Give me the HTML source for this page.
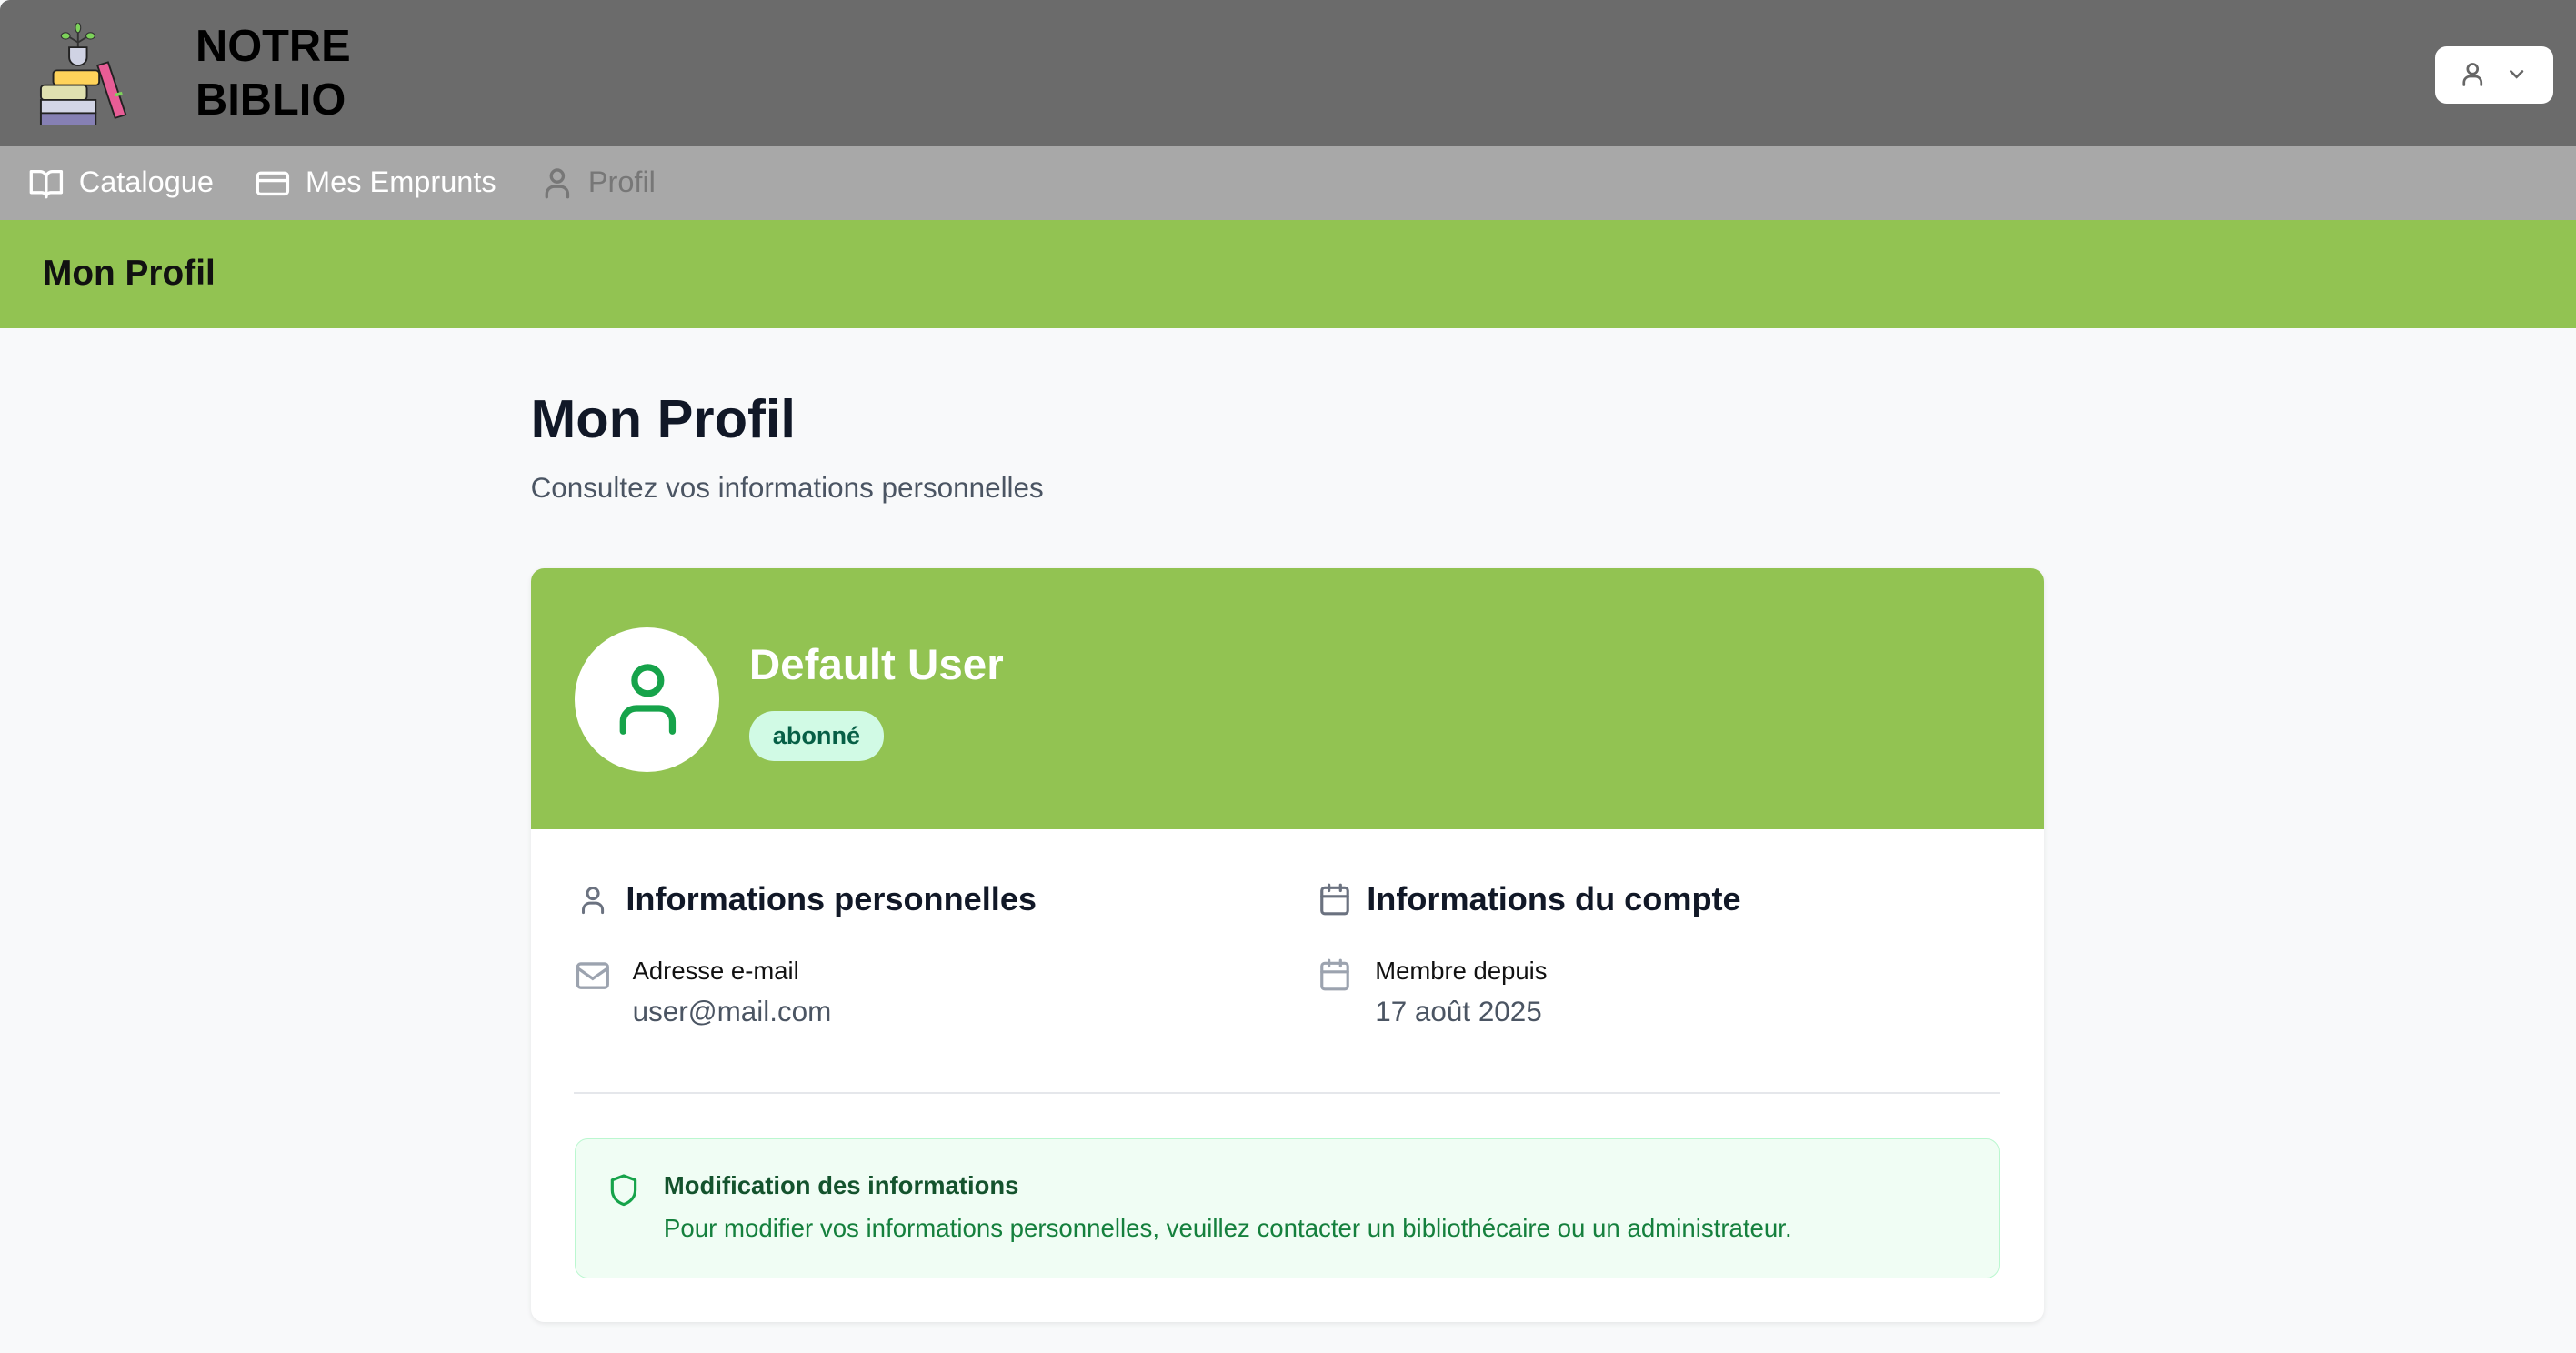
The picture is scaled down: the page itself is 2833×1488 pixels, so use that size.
<!DOCTYPE html>
<html><head><meta charset="utf-8"><style>
*{margin:0;padding:0;box-sizing:border-box}
html,body{width:2833px;height:1488px;overflow:hidden}
body{background:#f8f9fa;font-family:"Liberation Sans",sans-serif}
#w{zoom:1.80676;width:1568px;height:824px;position:relative}
.a{position:absolute}
svg{display:block}
</style></head><body><div id="w">
<div class="a" style="left:0;top:0;width:1568px;height:89px;background:#6b6b6b;border-top-left-radius:6px"></div>
<svg class="a" style="left:24px;top:14px" width="56" height="62" viewBox="4 0 52 62" preserveAspectRatio="none">
<path d="M26 15 V4 M26 12 L20 8 M26 12 L32 8" stroke="#333" stroke-width="1"/>
<ellipse cx="26" cy="3" rx="1.5" ry="3" fill="#7dd35a" stroke="#333" stroke-width=".6"/>
<ellipse cx="19" cy="8" rx="2.5" ry="2" fill="#7dd35a" stroke="#333" stroke-width=".6"/>
<ellipse cx="33" cy="8" rx="2.5" ry="2" fill="#7dd35a" stroke="#333" stroke-width=".6"/>
<path d="M21 15 h10 v6 a5 5 0 0 1 -10 0z" fill="#d0d3e4" stroke="#222" stroke-width="1"/>
<rect x="12" y="29" width="26" height="9" rx="2" fill="#ffd35a" stroke="#222"/>
<rect x="5" y="38" width="26" height="9" rx="2" fill="#dfe0b0" stroke="#222"/>
<rect x="5" y="47" width="31" height="8" fill="#d3d5e6" stroke="#222"/>
<rect x="5" y="55" width="31" height="8" fill="#8680b4" stroke="#222"/>
<path d="M43 24 l10 32 l-6 2 l-10 -32z" fill="#e85d96" stroke="#222"/>
<path d="M47 44 l4 -1" stroke="#7dd35a" stroke-width="2"/>
</svg>
<div class="a" style="left:119px;top:12px;font-size:27px;font-weight:bold;line-height:33px;color:#000">NOTRE<br>BIBLIO</div>
<div class="a" style="left:1482px;top:28px;width:72px;height:35px;background:#fff;border-radius:7px"></div>
<svg class="a" style="left:1496px;top:36px" width="18" height="18" viewBox="0 0 24 24" fill="none" stroke="#666" stroke-width="2" stroke-linecap="round"><circle cx="12" cy="8" r="4"/><path d="M5 21v-2a5 5 0 0 1 5-5h4a5 5 0 0 1 5 5v2"/></svg>
<svg class="a" style="left:1525px;top:38px" width="14" height="14" viewBox="0 0 24 24" fill="none" stroke="#666" stroke-width="2.5" stroke-linecap="round"><path d="M6 9l6 6 6-6"/></svg>

<div class="a" style="left:0;top:89px;width:1568px;height:45px;background:#a8a8a8"></div>
<svg class="a" style="left:17px;top:101px" width="22" height="22" viewBox="0 0 24 24" fill="none" stroke="#fff" stroke-width="2" stroke-linejoin="round"><path d="M2 4h6a4 4 0 0 1 4 4v13a3 3 0 0 0-3-3H2z M22 4h-6a4 4 0 0 0-4 4v13a3 3 0 0 1 3-3h7z"/></svg>
<div class="a" style="left:48px;top:100px;font-size:18px;color:#fff;line-height:22px">Catalogue</div>
<svg class="a" style="left:155px;top:101px" width="22" height="22" viewBox="0 0 24 24" fill="none" stroke="#fff" stroke-width="2"><rect x="2" y="5" width="20" height="14" rx="2"/><path d="M2 10h20"/></svg>
<div class="a" style="left:186px;top:100px;font-size:18px;color:#fff;line-height:22px">Mes Emprunts</div>
<svg class="a" style="left:328px;top:101px" width="22" height="22" viewBox="0 0 24 24" fill="none" stroke="#777" stroke-width="2" stroke-linecap="round"><circle cx="12" cy="7" r="4"/><path d="M5 21v-2a5 5 0 0 1 5-5h4a5 5 0 0 1 5 5v2"/></svg>
<div class="a" style="left:358px;top:100px;font-size:18px;color:#777;line-height:22px">Profil</div>

<div class="a" style="left:0;top:134px;width:1568px;height:66px;background:#92c352"></div>
<div class="a" style="left:26px;top:154px;font-size:21.5px;font-weight:bold;color:#111;line-height:26px">Mon Profil</div>

<div class="a" style="left:323px;top:235px;font-size:33px;font-weight:bold;color:#111827;line-height:40px">Mon Profil</div>
<div class="a" style="left:323px;top:287px;font-size:17.4px;color:#4b5563;line-height:20px">Consultez vos informations personnelles</div>

<div class="a" style="left:323px;top:346px;width:921px;height:459px;background:#fff;border-radius:8px;box-shadow:0 1px 3px rgba(0,0,0,.08);overflow:hidden">
 <div style="height:159px;background:#92c352"></div>
</div>
<div class="a" style="left:350px;top:382px;width:88px;height:88px;border-radius:50%;background:#fff"></div>
<svg class="a" style="left:370px;top:400px" width="48" height="50" viewBox="0 0 48 50" fill="none" stroke="#16a34a" stroke-width="4" stroke-linecap="round"><circle cx="24" cy="14" r="8"/><path d="M9 45v-6a8 8 0 0 1 8-8h14a8 8 0 0 1 8 8v6"/></svg>
<div class="a" style="left:456px;top:390px;font-size:26.3px;font-weight:bold;color:#fff;line-height:30px">Default User</div>
<div class="a" style="left:456px;top:433px;width:82px;height:30px;border-radius:15px;background:#d1fae5;color:#065f46;font-size:15px;font-weight:bold;text-align:center;line-height:30px">abonné</div>

<svg class="a" style="left:351px;top:538px" width="20" height="20" viewBox="0 0 24 24" fill="none" stroke="#6b7280" stroke-width="2" stroke-linecap="round"><circle cx="12" cy="7" r="4"/><path d="M5 21v-2a5 5 0 0 1 5-5h4a5 5 0 0 1 5 5v2"/></svg>
<div class="a" style="left:381px;top:535px;font-size:20px;font-weight:bold;color:#111827;line-height:24px">Informations personnelles</div>
<svg class="a" style="left:350px;top:584px" width="22" height="20" viewBox="0 0 24 22" fill="none" stroke="#9ca3af" stroke-width="2"><rect x="2" y="3" width="20" height="16" rx="2"/><path d="M2 6l10 7 10-7"/></svg>
<div class="a" style="left:385px;top:582px;font-size:15.2px;color:#111;line-height:18px">Adresse e-mail</div>
<div class="a" style="left:385px;top:606px;font-size:17.4px;color:#4b5563;line-height:20px">user@mail.com</div>

<svg class="a" style="left:802px;top:537px" width="21" height="21" viewBox="0 0 24 24" fill="none" stroke="#6b7280" stroke-width="2" stroke-linecap="round"><rect x="3" y="4" width="18" height="18" rx="2"/><path d="M16 2v4M8 2v4M3 10h18"/></svg>
<div class="a" style="left:832px;top:535px;font-size:20px;font-weight:bold;color:#111827;line-height:24px">Informations du compte</div>
<svg class="a" style="left:802px;top:583px" width="21" height="21" viewBox="0 0 24 24" fill="none" stroke="#9ca3af" stroke-width="2" stroke-linecap="round"><rect x="3" y="4" width="18" height="18" rx="2"/><path d="M16 2v4M8 2v4M3 10h18"/></svg>
<div class="a" style="left:837px;top:582px;font-size:15.2px;color:#111;line-height:18px">Membre depuis</div>
<div class="a" style="left:837px;top:606px;font-size:17.4px;color:#4b5563;line-height:20px">17 août 2025</div>

<div class="a" style="left:349px;top:665px;width:868px;height:1px;background:#e5e7eb"></div>
<div class="a" style="left:350px;top:693px;width:867px;height:85px;background:#f0fdf4;border:1px solid #bbf7d0;border-radius:8px"></div>
<svg class="a" style="left:369px;top:713px" width="21" height="23" viewBox="0 0 24 24" fill="none" stroke="#16a34a" stroke-width="2" stroke-linejoin="round"><path d="M12 2l8 3v7c0 5-3.5 8.5-8 10-4.5-1.5-8-5-8-10V5z"/></svg>
<div class="a" style="left:404px;top:713px;font-size:15.2px;font-weight:bold;color:#14532d;line-height:18px">Modification des informations</div>
<div class="a" style="left:404px;top:739px;font-size:15.3px;color:#15803d;line-height:18px">Pour modifier vos informations personnelles, veuillez contacter un bibliothécaire ou un administrateur.</div>
</div></body></html>
